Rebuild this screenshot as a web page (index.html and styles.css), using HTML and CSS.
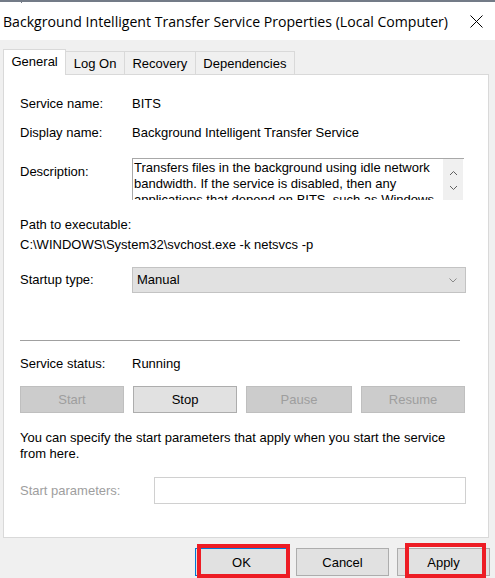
FILE: index.html
```html
<!DOCTYPE html>
<html>
<head>
<meta charset="utf-8">
<link rel="stylesheet" href="styles.css">
</head>
<body>
<div class="window">
  <div class="topline"><span class="tick"></span></div>
  <div class="titlebar">
    <span class="title">Background Intelligent Transfer Service Properties (Local Computer)</span>
    <svg class="close" width="13" height="13" viewBox="0 0 13 13"><path d="M0.5 0.5 L12.5 12.5 M12.5 0.5 L0.5 12.5" stroke="#000" stroke-width="1" fill="none"/></svg>
  </div>
  <div class="tabs">
    <div class="tab active">General</div>
    <div class="tab">Log On</div>
    <div class="tab">Recovery</div>
    <div class="tab">Dependencies</div>
  </div>
  <div class="panel">
    <div class="row r1"><span class="label">Service name:</span><span>BITS</span></div>
    <div class="row r2"><span class="label">Display name:</span><span>Background Intelligent Transfer Service</span></div>
    <div class="row desc-row">
      <span class="label desc-label">Description:</span>
      <div class="descbox">
        <div class="desctext">Transfers files in the background using idle network<br>bandwidth. If the service is disabled, then any<br>applications that depend on BITS, such as Windows</div>
        <div class="scroll">
          <svg width="9" height="6" viewBox="0 0 9 6"><path d="M1 5 L4.5 1.5 L8 5" stroke="#606060" fill="none" stroke-width="1"/></svg>
          <svg width="9" height="6" viewBox="0 0 9 6"><path d="M1 1 L4.5 4.5 L8 1" stroke="#606060" fill="none" stroke-width="1"/></svg>
        </div>
      </div>
    </div>
    <div class="line path-label">Path to executable:</div>
    <div class="line path-value">C:\WINDOWS\System32\svchost.exe -k netsvcs -p</div>
    <div class="row startup-row">
      <span class="label">Startup type:</span>
      <div class="combo"><span>Manual</span>
        <svg width="8" height="5" viewBox="0 0 8 5"><path d="M0.5 0.5 L4 4 L7.5 0.5" stroke="#8a8a8a" fill="none" stroke-width="1"/></svg>
      </div>
    </div>
    <div class="sep"></div>
    <div class="row status-row"><span class="label">Service status:</span><span>Running</span></div>
    <div class="btnrow">
      <div class="btn disabled w104">Start</div>
      <div class="btn w104">Stop</div>
      <div class="btn disabled w106">Pause</div>
      <div class="btn disabled w104">Resume</div>
    </div>
    <p class="info">You can specify the start parameters that apply when you start the service from here.</p>
    <div class="row params-row">
      <span class="label plabel">Start parameters:</span>
      <div class="input"></div>
    </div>
  </div>
  <div class="footer">
    <div class="fbtn focused">OK</div>
    <div class="fbtn">Cancel</div>
    <div class="fbtn">Apply</div>
  </div>
  <div class="mark mark-ok"></div>
  <div class="mark mark-apply"></div>
</div>
</body>
</html>
```
FILE: styles.css
```css
html, body {
  margin: 0;
  padding: 0;
}
body {
  width: 495px;
  height: 578px;
  overflow: hidden;
  background: #f0f0f0;
  font-family: "Liberation Sans", Arial, sans-serif;
  font-size: 13px;
  color: #000;
}
.window {
  position: relative;
  width: 495px;
  height: 578px;
  overflow: hidden;
}
.topline {
  height: 2px;
  background: #737b87;
  position: relative;
}
.tick {
  position: absolute;
  left: 21px;
  top: 0;
  width: 1px;
  height: 3px;
  background: #737b87;
}
.titlebar {
  height: 38px;
  background: #fff;
  display: flex;
  align-items: center;
  padding-left: 3px;
}
.title {
  font-family: "Open Sans", "Noto Sans", sans-serif;
  font-size: 14.1px;
  flex: 1;
  white-space: nowrap;
  margin-top: 1px;
}
.close {
  margin-right: 12px;
  margin-top: 1px;
}
.tabs {
  display: flex;
  align-items: flex-end;
  margin-top: 9px;
  padding-left: 3px;
  height: 25px;
  position: relative;
  z-index: 1;
}
.tab {
  height: 23px;
  line-height: 23px;
  padding: 0 7.5px;
  border: 1px solid #d9d9d9;
  border-bottom: none;
  border-left: none;
  box-sizing: border-box;
  background: #f0f0f0;
}
.tab.active {
  height: 26px;
  line-height: 24px;
  border-left: 1px solid #d9d9d9;
  background: #fff;
  margin-bottom: -1px;
}
.panel {
  margin-left: 3px;
  width: 486px;
  height: 464px;
  box-sizing: border-box;
  border: 1px solid #d9d9d9;
  background: #fff;
  padding-left: 16px;
  overflow: hidden;
}
.row {
  display: flex;
  line-height: 16px;
}
.label {
  width: 112px;
  flex: none;
}
.r1 { margin-top: 21px; }
.r2 { margin-top: 13px; }
.desc-row {
  margin-top: 17px;
  align-items: flex-start;
}
.desc-label { margin-top: 6px; }
.descbox {
  width: 332px;
  height: 42px;
  box-sizing: border-box;
  border-top: 1px solid #a8a8a8;
  border-left: 1px solid #a8a8a8;
  display: flex;
  overflow: hidden;
}
.desctext {
  flex: 1;
  padding: 1px 0 0 1px;
  white-space: nowrap;
  overflow: hidden;
}
.scroll {
  width: 20px;
  margin-right: 1px;
  background: #f0f0f0;
  display: flex;
  flex-direction: column;
  align-items: center;
  justify-content: space-around;
  padding: 6px 0 4px;
  box-sizing: border-box;
}
.line { line-height: 16px; }
.path-label { margin-top: 17px; }
.path-value { margin-top: 4px; }
.startup-row {
  margin-top: 14px;
  align-items: center;
}
.combo {
  width: 334px;
  height: 26px;
  box-sizing: border-box;
  background: #e1e1e1;
  border: 1px solid #c3c3c3;
  display: flex;
  align-items: center;
  justify-content: space-between;
  padding: 0 8px 0 4px;
}
.sep {
  margin-top: 47px;
  width: 440px;
  height: 1px;
  background: #a0a0a0;
}
.status-row { margin-top: 15px; }
.btnrow {
  margin-top: 14px;
  width: 445px;
  display: flex;
  justify-content: space-between;
}
.btn {
  height: 27px;
  box-sizing: border-box;
  border: 1px solid #adadad;
  background: #e1e1e1;
  display: flex;
  align-items: center;
  justify-content: center;
}
.btn.disabled {
  background: #cccccc;
  border-color: #bfbfbf;
  color: #9e9e9e;
}
.w104 { width: 104px; }
.w106 { width: 106px; }
.info {
  margin: 17px 0 0;
  width: 445px;
  line-height: 16px;
}
.params-row {
  margin-top: 15px;
  align-items: center;
}
.plabel {
  width: 134px;
  color: #9e9e9e;
}
.input {
  width: 312px;
  height: 27px;
  box-sizing: border-box;
  border: 1px solid #d0d0d0;
  background: #fff;
}
.footer {
  margin-top: 10px;
  display: flex;
  justify-content: flex-end;
  gap: 8px;
  padding-right: 5px;
}
.fbtn {
  width: 93px;
  height: 28px;
  box-sizing: border-box;
  border: 1px solid #adadad;
  background: #e1e1e1;
  display: flex;
  align-items: center;
  justify-content: center;
}
.fbtn.focused {
  border-color: #0078d7;
}
.mark {
  position: absolute;
  border: 4px solid #ed1c24;
  box-sizing: border-box;
}
.mark-ok {
  left: 197px;
  top: 544px;
  width: 93px;
  height: 34px;
}
.mark-apply {
  left: 405px;
  top: 543px;
  width: 81px;
  height: 35px;
}
```
